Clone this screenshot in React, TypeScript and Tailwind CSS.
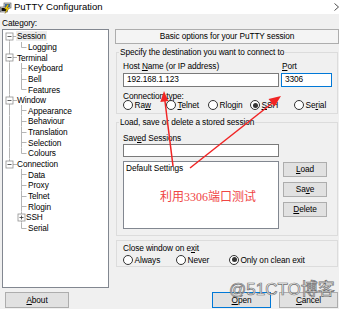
import React from "react";

interface TreeNode {
  label: string;
  level: 0 | 1;
  first?: boolean;
  last?: boolean;
  lastChild?: boolean;
  parentLast?: boolean;
  collapsed?: boolean;
  selected?: boolean;
}

const tree: TreeNode[] = [
  { label: "Session", level: 0, first: true, selected: true },
  { label: "Logging", level: 1, lastChild: true },
  { label: "Terminal", level: 0 },
  { label: "Keyboard", level: 1 },
  { label: "Bell", level: 1 },
  { label: "Features", level: 1, lastChild: true },
  { label: "Window", level: 0 },
  { label: "Appearance", level: 1 },
  { label: "Behaviour", level: 1 },
  { label: "Translation", level: 1 },
  { label: "Selection", level: 1 },
  { label: "Colours", level: 1, lastChild: true },
  { label: "Connection", level: 0, last: true },
  { label: "Data", level: 1, parentLast: true },
  { label: "Proxy", level: 1, parentLast: true },
  { label: "Telnet", level: 1, parentLast: true },
  { label: "Rlogin", level: 1, parentLast: true },
  { label: "SSH", level: 1, parentLast: true, collapsed: true },
  { label: "Serial", level: 1, parentLast: true, lastChild: true },
];

const H = 10.65;
const C = 5.5;

// little box with - or + used by the tree
function Expander({ x, plus }: { x: number; plus?: boolean }) {
  return (
    <g>
      <rect x={x - 3.5} y={C - 3.5} width={7} height={7} fill="#fff" stroke="#919191" strokeWidth={0.8} />
      <line x1={x - 2} y1={C} x2={x + 2} y2={C} stroke="#333" strokeWidth={0.8} />
      {plus && <line x1={x} y1={C - 2} x2={x} y2={C + 2} stroke="#333" strokeWidth={0.8} />}
    </g>
  );
}

function TreeRow({ node }: { node: TreeNode }) {
  const line = "#b5b5b5";
  if (node.level === 0) {
    return (
      <div className="flex items-center h-[10.65px]">
        <svg width={14} height={H} className="shrink-0">
          <line x1={6.5} y1={node.first ? C : 0} x2={6.5} y2={node.last ? C : H} stroke={line} />
          <line x1={10} y1={C} x2={14} y2={C} stroke={line} />
          <Expander x={6.5} />
        </svg>
        <span className={node.selected ? "px-[1px] -ml-[1px] bg-[#ececec] leading-[10px]" : "leading-[10px]"}>
          {node.label}
        </span>
      </div>
    );
  }
  return (
    <div className="flex items-center h-[10.65px]">
      <svg width={node.collapsed ? 23 : 25} height={H} className="shrink-0">
        {!node.parentLast && <line x1={6.5} y1={0} x2={6.5} y2={H} stroke={line} />}
        <line x1={18.5} y1={0} x2={18.5} y2={node.lastChild ? C : H} stroke={line} />
        {node.collapsed ? (
          <Expander x={18.5} plus />
        ) : (
          <line x1={18.5} y1={C} x2={23.5} y2={C} stroke={line} />
        )}
      </svg>
      <span className="leading-[10px]">{node.label}</span>
    </div>
  );
}

function Radio({ label, checked, className }: { label: React.ReactNode; checked?: boolean; className: string }) {
  return (
    <div className={"flex items-center h-[10px] " + className}>
      <span className="w-[10px] h-[10px] rounded-full border border-[#333] bg-white flex items-center justify-center shrink-0">
        {checked && <span className="w-[5px] h-[5px] rounded-full bg-[#333]" />}
      </span>
      <span className="ml-[1.5px] leading-[10px]">{label}</span>
    </div>
  );
}

function Button({ children, className }: { children: React.ReactNode; className: string }) {
  return (
    <div className={"flex items-center justify-center border bg-[#e1e1e1] " + className}>
      {children}
    </div>
  );
}

export default function App() {
  return (
    <div className="relative w-[339px] h-[309px] overflow-hidden bg-[#f0f0f0] text-black text-[8.3px] tracking-[-0.1px] font-['Liberation_Sans',Arial,sans-serif]">
      {/* title bar */}
      <div className="h-[14px] bg-white flex items-center">
        <svg width={12} height={12} viewBox="0 0 12 12" className="shrink-0 mt-[1px]">
          <rect x={4} y={1} width={7} height={5} fill="#cfcfcf" stroke="#555" strokeWidth={0.6} />
          <rect x={5} y={2} width={5} height={3} fill="#3a6ea5" />
          <rect x={0.5} y={5} width={7} height={5} fill="#cfcfcf" stroke="#555" strokeWidth={0.6} />
          <rect x={1.5} y={6} width={5} height={3} fill="#111" />
          <polygon points="7.5,2.5 4.5,7 6.5,7 5,11.5 9.5,6 7.3,6 8.8,2.5" fill="#f7d300" stroke="#7a5c00" strokeWidth={0.4} />
        </svg>
        <span className="ml-[2px] text-[9.5px] tracking-normal leading-[12px]">PuTTY Configuration</span>
        <svg width={5} height={12} className="ml-auto shrink-0">
          <polyline points="0.5,2.5 4.5,6 0.5,9.5" fill="none" stroke="#222" strokeWidth={0.8} />
        </svg>
      </div>

      <div className="flex h-[274px]">
        {/* category tree */}
        <div className="ml-[2px] w-[111px] flex flex-col">
          <div className="pt-[3px] h-[15px] leading-[12px]">Category:</div>
          <div className="flex-1 border border-[#828790] bg-white pt-[1px]">
            {tree.map((n) => (
              <TreeRow key={n.label} node={n} />
            ))}
          </div>
        </div>

        {/* session panel */}
        <div className="ml-[6px] w-[224px] shrink-0 pt-[15px] flex flex-col">
          <div className="h-[14.5px] border border-[#adadad] bg-[#f4f4f4] flex items-center justify-center">
            Basic options for your PuTTY session
          </div>

          <fieldset className="mt-[3.5px] ml-[1px] w-[222px] border border-[#dcdcdc] pl-[6px] pb-[3px]">
            <legend className="-ml-[4px] px-[1px] leading-[10px]">Specify the destination you want to connect to</legend>
            <div className="flex mt-[3.5px]">
              <div className="w-[156px]">
                <div className="h-[10px] leading-[10px]">
                  Host <u>N</u>ame (or IP address)
                </div>
                <div className="mt-[2px] h-[14px] border border-[#7a7a7a] bg-white flex items-center pl-[3px]">192.168.1.123</div>
              </div>
              <div className="ml-[2px] w-[51px]">
                <div className="h-[10px] leading-[10px] pl-[1px]">
                  <u>P</u>ort
                </div>
                <div className="mt-[2px] h-[14px] border border-[#0078d7] bg-white flex items-center pl-[3px]">3306</div>
              </div>
            </div>
            <div className="mt-[5px] h-[8.5px] leading-[8.5px]">Connection type:</div>
            <div className="flex">
              <Radio className="w-[43px]" label={<>Ra<u>w</u></>} />
              <Radio className="w-[42px]" label={<><u>T</u>elnet</>} />
              <Radio className="w-[42px]" label={<>Rlo<u>g</u>in</>} />
              <Radio className="w-[44px]" checked label={<><u>S</u>SH</>} />
              <Radio className="w-[42px]" label={<>Se<u>r</u>ial</>} />
            </div>
          </fieldset>

          <fieldset className="mt-[3px] ml-[1px] w-[222px] border border-[#dcdcdc] pl-[6px] pb-[6px]">
            <legend className="-ml-[4px] px-[1px] leading-[10px]">Load, save or delete a stored session</legend>
            <div className="mt-[6px] h-[10px] leading-[10px]">
              Sav<u>e</u>d Sessions
            </div>
            <div className="mt-[1px] w-[156px] h-[13px] border border-[#7a7a7a] bg-white" />
            <div className="mt-[4px] flex">
              <div className="w-[156px] h-[68px] border border-[#828790] bg-white pl-[2px] pt-[1px] leading-[10px]">
                Default Settings
              </div>
              <div className="ml-[4px] flex flex-col pt-[1px] gap-[5px]">
                <Button className="w-[44px] h-[15px] border-[#adadad]"><u>L</u>oad</Button>
                <Button className="w-[44px] h-[15px] border-[#adadad]">Sa<u>v</u>e</Button>
                <Button className="w-[44px] h-[15px] border-[#adadad]"><u>D</u>elete</Button>
              </div>
            </div>
          </fieldset>

          <div className="mt-[4px] ml-[1px] w-[222px] border border-[#dcdcdc] pl-[6px] pt-[3px] pb-[1.5px]">
            <div className="h-[9px] leading-[9px]">
              Close window on e<u>x</u>it
            </div>
            <div className="mt-[1.5px] flex">
              <Radio className="w-[53px]" label="Always" />
              <Radio className="w-[53px]" label="Never" />
              <Radio className="w-[100px]" checked label="Only on clean exit" />
            </div>
          </div>
        </div>
      </div>

      {/* bottom buttons */}
      <div className="mt-[4px] flex">
        <Button className="ml-[5px] w-[64px] h-[16px] border-[#adadad]"><u>A</u>bout</Button>
        <Button className="ml-[143px] w-[59px] h-[16px] border-[#0078d7]"><u>O</u>pen</Button>
        <Button className="ml-[8px] w-[59px] h-[16px] shrink-0 border-[#adadad]"><u>C</u>ancel</Button>
      </div>

      {/* red annotation arrows */}
      <svg className="absolute left-0 top-0 pointer-events-none" width={339} height={309}>
        <line x1={173} y1={166} x2={164.8} y2={100} stroke="#f02424" strokeWidth={1.5} />
        <polygon points="164,91 160.3,102 168.3,101" fill="#f02424" />
        <line x1={190} y1={168} x2={273} y2={102.5} stroke="#f02424" strokeWidth={1.5} />
        <polygon points="281,96 268.5,99 274.5,106.5" fill="#f02424" />
      </svg>

      <div className="absolute left-[160px] top-[189px] text-[12px] leading-[16px] tracking-normal text-[#f04545] font-['Liberation_Serif','Noto_Sans_CJK_SC',serif]">
        利用3306端口测试
      </div>

      <div className="absolute left-[229px] top-[279px] text-[17px] leading-[22px] tracking-normal text-white [-webkit-text-stroke:0.7px_#6e6e6e] font-['Liberation_Sans','Noto_Sans_CJK_SC',sans-serif]">
        @51CTO博客
      </div>
    </div>
  );
}
